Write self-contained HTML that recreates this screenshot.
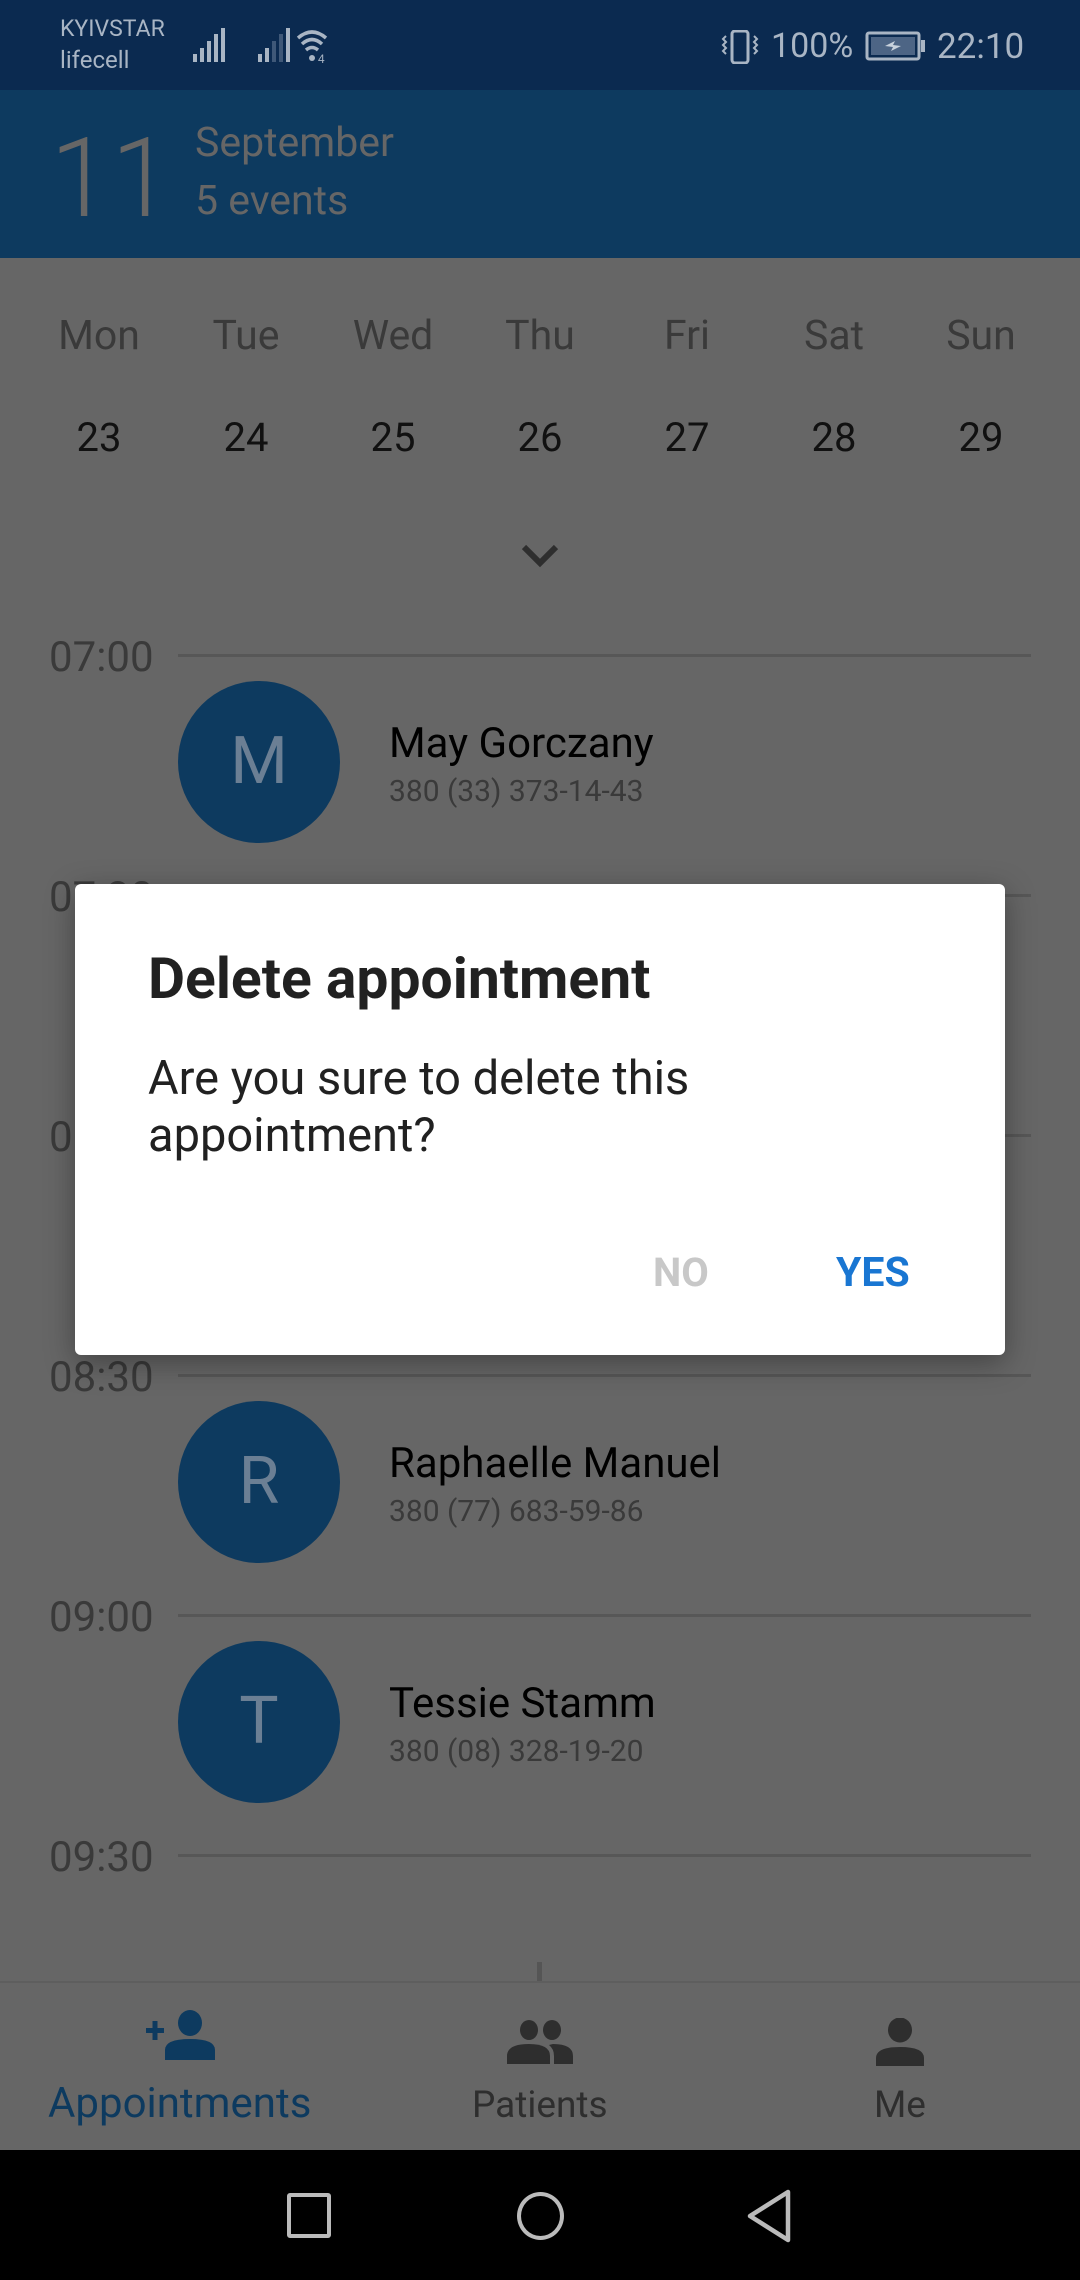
<!DOCTYPE html>
<html><head><meta charset="utf-8"><style>
*{margin:0;padding:0;box-sizing:border-box}
body{width:1080px;height:2280px;position:relative;overflow:hidden;background:#666;font-family:"Roboto","Liberation Sans",sans-serif}
.a{position:absolute;line-height:1;white-space:nowrap}
.day{position:absolute;width:140px;text-align:center;line-height:1}
.line{position:absolute;left:178px;width:853px;height:3px;background:#575757}
.tl{position:absolute;left:49px;font-size:42px;color:#3a3a3a;line-height:1}
.av{position:absolute;left:178px;width:162px;height:162px;border-radius:50%;background:#0d3a5f;color:#6b7f94;font-size:66px;text-align:center;line-height:162px}
.nm{position:absolute;left:389px;font-size:42px;color:#000;line-height:1}
.ph{position:absolute;left:389px;font-size:30px;color:#3a3a3a;line-height:1}
</style></head><body>
<!-- status bar -->
<div style="position:absolute;left:0;top:0;width:1080px;height:90px;background:#0b2a50"></div>
<div class="a" style="left:60px;top:17px;font-size:23px;color:#a9b5c4">KYIVSTAR</div>
<div class="a" style="left:60px;top:48px;font-size:24px;color:#a9b5c4">lifecell</div>
<svg style="position:absolute;left:190px;top:28px" width="150" height="36" viewBox="0 0 150 36">
<g fill="#a9b5c4"><rect x="3" y="26" width="4" height="8"/><rect x="10" y="20" width="4" height="14"/><rect x="17" y="13" width="4" height="21"/><rect x="24" y="6" width="4" height="28"/><rect x="31" y="0" width="4" height="34"/>
<rect x="68" y="26" width="4" height="8"/><rect x="75" y="20" width="4" height="14"/></g>
<g fill="#3f5878"><rect x="82" y="13" width="4" height="21"/><rect x="89" y="6" width="4" height="28"/></g>
<rect x="96" y="0" width="4" height="34" fill="#a9b5c4"/>
<g fill="none" stroke="#a9b5c4" stroke-width="3.5"><path d="M108 10 Q122 -2 136 10"/><path d="M112 16 Q122 7 132 16"/><path d="M116 22 Q122 17 128 22"/></g>
<circle cx="122" cy="30" r="3" fill="#a9b5c4"/><text x="128" y="35" font-size="12" fill="#a9b5c4" font-family="Liberation Sans">4</text>
</svg>
<svg style="position:absolute;left:720px;top:30px" width="40" height="34" viewBox="0 0 40 34"><rect x="12" y="1" width="16" height="32" rx="3" fill="none" stroke="#a9b5c4" stroke-width="3"/><path d="M6 6 l-3 3 3 3 -3 3 3 3 -3 3 3 3M34 6 l3 3 -3 3 3 3 -3 3 3 3 -3 3" fill="none" stroke="#a9b5c4" stroke-width="2"/></svg>
<div class="a" style="left:771px;top:29px;font-size:34px;color:#a9b5c4">100%</div>
<svg style="position:absolute;left:865px;top:31px" width="62" height="30" viewBox="0 0 62 30"><rect x="2" y="2" width="52" height="26" rx="2" fill="none" stroke="#a9b5c4" stroke-width="3"/><rect x="6" y="6" width="44" height="18" fill="#4d6585"/><rect x="56" y="9" width="4" height="12" fill="#a9b5c4"/><path d="M20 15 L30 10 L28 14 L36 15 L26 20 L28 16Z" fill="#c8d2dd"/></svg>
<div class="a" style="left:937px;top:29px;font-size:35px;color:#a9b5c4">22:10</div>
<!-- header -->
<div style="position:absolute;left:0;top:90px;width:1080px;height:168px;background:#0d3a5f"></div>
<div class="a" style="left:50px;top:124px;font-size:110px;font-weight:300;color:#666">11</div>
<div class="a" style="left:195px;top:123px;font-size:41px;color:#666">September</div>
<div class="a" style="left:195px;top:181px;font-size:41px;color:#666">5 events</div>
<!-- days -->
<div class="day" style="left:29px;top:316px;font-size:41px;color:#3a3a3a">Mon</div>
<div class="day" style="left:176px;top:316px;font-size:41px;color:#3a3a3a">Tue</div>
<div class="day" style="left:323px;top:316px;font-size:41px;color:#3a3a3a">Wed</div>
<div class="day" style="left:470px;top:316px;font-size:41px;color:#3a3a3a">Thu</div>
<div class="day" style="left:617px;top:316px;font-size:41px;color:#3a3a3a">Fri</div>
<div class="day" style="left:764px;top:316px;font-size:41px;color:#3a3a3a">Sat</div>
<div class="day" style="left:911px;top:316px;font-size:41px;color:#3a3a3a">Sun</div>
<div class="day" style="left:29px;top:418px;font-size:40px;color:#111">23</div>
<div class="day" style="left:176px;top:418px;font-size:40px;color:#111">24</div>
<div class="day" style="left:323px;top:418px;font-size:40px;color:#111">25</div>
<div class="day" style="left:470px;top:418px;font-size:40px;color:#111">26</div>
<div class="day" style="left:617px;top:418px;font-size:40px;color:#111">27</div>
<div class="day" style="left:764px;top:418px;font-size:40px;color:#111">28</div>
<div class="day" style="left:911px;top:418px;font-size:40px;color:#111">29</div>
<svg style="position:absolute;left:520px;top:543px" width="40" height="26" viewBox="0 0 40 26"><path d="M4 4 L20 20 L36 4" fill="none" stroke="#2e2e2e" stroke-width="6"/></svg>
<!-- timeline -->
<div class="tl" style="top:637px">07:00</div><div class="line" style="top:654px"></div>
<div class="tl" style="top:877px">07:30</div><div class="line" style="top:894px"></div>
<div class="tl" style="top:1117px">08:00</div><div class="line" style="top:1134px"></div>
<div class="tl" style="top:1357px">08:30</div><div class="line" style="top:1374px"></div>
<div class="tl" style="top:1597px">09:00</div><div class="line" style="top:1614px"></div>
<div class="tl" style="top:1837px">09:30</div><div class="line" style="top:1854px"></div>
<div class="av" style="top:681px">M</div>
<div class="nm" style="top:723px">May Gorczany</div>
<div class="ph" style="top:777px">380 (33) 373-14-43</div>
<div class="av" style="top:1401px">R</div>
<div class="nm" style="top:1443px">Raphaelle Manuel</div>
<div class="ph" style="top:1497px">380 (77) 683-59-86</div>
<div class="av" style="top:1641px">T</div>
<div class="nm" style="top:1683px">Tessie Stamm</div>
<div class="ph" style="top:1737px">380 (08) 328-19-20</div>
<div style="position:absolute;left:537px;top:1962px;width:5px;height:19px;background:#555"></div>
<!-- bottom nav -->
<div style="position:absolute;left:0;top:1981px;width:1080px;height:2px;background:#5e5e5e"></div>
<svg style="position:absolute;left:145px;top:2010px" width="72" height="52" viewBox="0 0 72 52"><g fill="#0d3a5f"><rect x="1" y="18" width="18" height="5"/><rect x="7.5" y="11" width="5" height="19"/><ellipse cx="45" cy="13" rx="12" ry="13"/><path d="M20 50 V40 Q20 29 45 29 Q70 29 70 40 V50Z"/></g></svg>
<svg style="position:absolute;left:506px;top:2020px" width="68" height="44" viewBox="0 0 68 44"><g fill="#2e2e2e"><ellipse cx="23" cy="10" rx="9" ry="10"/><ellipse cx="46" cy="10" rx="9" ry="10"/><path d="M1 44 V36 Q1 24 23 24 Q44 24 44 36 V44Z"/><path d="M47 24 Q67 24 67 36 V44 H48 V36 Q48 29 43 25Z"/></g></svg>
<svg style="position:absolute;left:876px;top:2018px" width="48" height="48" viewBox="0 0 48 48"><g fill="#2e2e2e"><ellipse cx="24" cy="12" rx="12" ry="12.5"/><path d="M0 48 V40 Q0 29 24 29 Q48 29 48 40 V48Z"/></g></svg>
<div class="a" style="left:48px;top:2083px;font-size:42px;color:#0d3a5f">Appointments</div>
<div class="a" style="left:472px;top:2087px;font-size:37px;color:#2e2e2e">Patients</div>
<div class="a" style="left:874px;top:2087px;font-size:37px;color:#2e2e2e">Me</div>
<!-- system nav -->
<div style="position:absolute;left:0;top:2150px;width:1080px;height:130px;background:#000"></div>
<div style="position:absolute;left:287px;top:2193px;width:44px;height:45px;border:4px solid #bbb;border-radius:3px"></div>
<div style="position:absolute;left:517px;top:2192px;width:47px;height:48px;border:4px solid #bbb;border-radius:50%"></div>
<svg style="position:absolute;left:744px;top:2188px" width="50" height="56" viewBox="0 0 50 56"><path d="M44 4 L6 28 L44 52Z" fill="none" stroke="#bbb" stroke-width="4.5" stroke-linejoin="round"/></svg>
<!-- dialog -->
<div style="position:absolute;left:75px;top:884px;width:930px;height:471px;background:#fff;border-radius:6px;box-shadow:0 8px 30px rgba(0,0,0,.35)">
<div class="a" style="left:73px;top:66px;font-size:57px;font-weight:bold;color:#212121">Delete appointment</div>
<div style="position:absolute;left:73px;top:166px;width:800px;font-size:47px;line-height:57px;color:#212121">Are you sure to delete this<br>appointment?</div>
<div class="a" style="left:578px;top:369px;font-size:40px;font-weight:bold;color:#c8c8c8">NO</div>
<div class="a" style="left:761px;top:369px;font-size:41px;font-weight:bold;color:#1976d2">YES</div>
</div>
</body></html>
